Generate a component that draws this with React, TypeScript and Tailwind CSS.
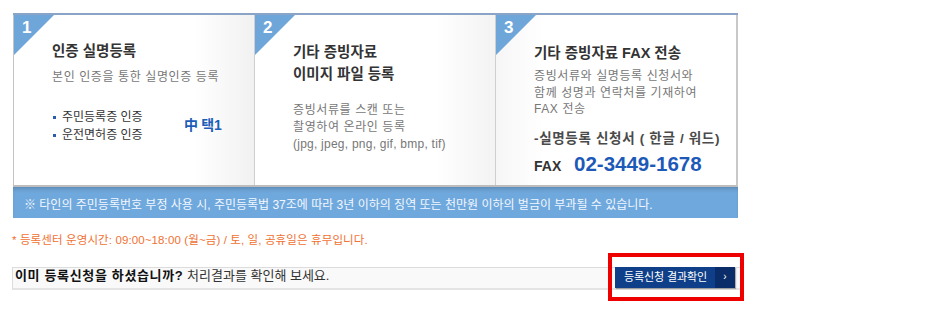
import React from "react";

const font = "font-['Liberation_Sans','Noto_Sans_CJK_KR',sans-serif]";

function Corner({ n }: { n: string }) {
  return (
    <div className="absolute left-0 top-0 w-[40px] h-[40px]">
      <div className="absolute inset-0 bg-[#6fa6da] [clip-path:polygon(0_0,100%_0,0_100%)]" />
      <span className="absolute left-[8px] top-[3px] text-[17px] font-bold leading-[20px] text-white">{n}</span>
    </div>
  );
}

export default function App() {
  return (
    <div className={`w-[936px] h-[311px] bg-white ${font} text-[#333]`}>
      <div className="pl-[13px] pt-[13px]">
        <div className="w-[725px] border-t-2 border-[#8aa4c8]">
          <div className="flex h-[172px] border-l border-[#c4c4c4] border-r-2 border-r-[#c8c8c8] border-b-2 border-b-[#bdbdbd]">
            {/* Card 1 */}
            <div className="relative w-[241px] h-full pl-[38px] pt-[26px] bg-linear-to-r from-white from-75% to-[#f1f1f1] border-r border-[#cfcfcf]">
              <Corner n="1" />
              <div className="text-[14.5px] font-bold leading-[20px] text-[#333]">인증 실명등록</div>
              <div className="mt-[8px] text-[12px] leading-[16px] text-[#777] tracking-[0.05em]">본인 인증을 통한 실명인증 등록</div>
              <div className="mt-[23px] flex items-center">
                <div className="w-[132px]">
                  <div className="flex items-center h-[18px] text-[12px] text-[#333]">
                    <span className="w-[3px] h-[3px] bg-[#2a5cae] mr-[6px] ml-[1px]" />
                    주민등록증 인증
                  </div>
                  <div className="flex items-center h-[18px] text-[12px] text-[#333]">
                    <span className="w-[3px] h-[3px] bg-[#2a5cae] mr-[6px] ml-[1px]" />
                    운전면허증 인증
                  </div>
                </div>
                <div className="text-[14px] font-bold text-[#1d5db8] tracking-[-0.02em] mt-[-2px]">中 택1</div>
              </div>
            </div>
            {/* Card 2 */}
            <div className="relative w-[241px] h-full pl-[38px] pt-[26px] bg-linear-to-r from-white from-75% to-[#f3f3f3] border-r border-[#cfcfcf]">
              <Corner n="2" />
              <div className="text-[14.5px] font-bold leading-[22px] text-[#333]">
                기타 증빙자료
                <br />
                이미지 파일 등록
              </div>
              <div className="mt-[17px] text-[12px] leading-[17px] text-[#777] tracking-[0.05em]">
                증빙서류를 스캔 또는
                <br />
                촬영하여 온라인 등록
                <br />
                <span className="tracking-[0.02em]">(jpg, jpeg, png, gif, bmp, tif)</span>
              </div>
            </div>
            {/* Card 3 */}
            <div className="relative flex-1 h-full pl-[38px] pt-[28px] bg-linear-to-r from-[#f6f6f6] via-white via-20% to-white">
              <Corner n="3" />
              <div className="text-[14.5px] font-bold leading-[20px] text-[#333]">기타 증빙자료 FAX 전송</div>
              <div className="mt-[5px] text-[12px] leading-[16.5px] text-[#777] tracking-[0.05em]">
                증빙서류와 실명등록 신청서와
                <br />
                함께 성명과 연락처를 기재하여
                <br />
                FAX 전송
              </div>
              <div className="mt-[11px] text-[13.5px] font-bold leading-[20px] text-[#4a4a4a] tracking-[0.05em]">-실명등록 신청서 ( 한글 / 워드)</div>
              <div className="mt-[0px] flex items-baseline h-[26px]">
                <span className="text-[14px] font-bold text-[#333] w-[40px]">FAX</span>
                <span className="text-[20.5px] font-bold text-[#1d5ab8]">02-3449-1678</span>
              </div>
            </div>
          </div>
          <div className="h-[31px] bg-[#6fa8dc] shadow-[inset_0_4px_4px_-2px_rgba(0,0,0,0.18)] pl-[11px] pt-[10px] text-[12px] leading-[16px] text-[#f2f7ff]">
            ※ 타인의 주민등록번호 부정 사용 시, 주민등록법 37조에 따라 3년 이하의 징역 또는 천만원 이하의 벌금이 부과될 수 있습니다.
          </div>
        </div>
      </div>
      <div className="pl-[12px] mt-[14px] text-[11.5px] leading-[16px] text-[#f07132] tracking-[0.01em]">
        * 등록센터 운영시간: 09:00~18:00 (월~금) / 토, 일, 공휴일은 휴무입니다.
      </div>
      <div className="relative pl-[12px] mt-[19px]">
        <div className="w-[728px] h-[23px] bg-[#f9f9f9] border-t border-l border-[#dcdcdc] border-b-2 border-b-[#e4e4e4] pl-[2px] text-[13px] leading-[16px]">
          <span className="font-bold text-[#111] tracking-[0.05em]">이미 등록신청을 하셨습니까?</span>
          <span className="text-[#333]"> 처리결과를 확인해 보세요.</span>
        </div>
        <div className="absolute left-[608px] top-[-14px] w-[136px] h-[48px] border-4 border-[#ee0000] pl-[3px] pt-[10px]">
          <div className="flex h-[21px] w-[120px] shadow-[1px_1px_1px_rgba(0,0,0,0.3)]">
            <div className="flex-1 bg-[#0f3f88] text-white text-[11px] leading-[21px] pl-[9px] tracking-[-0.01em]">등록신청 결과확인</div>
            <div className="w-[20px] bg-[#0a2d6a] text-white text-[10px] leading-[20px] text-center">›</div>
          </div>
        </div>
      </div>
    </div>
  );
}
